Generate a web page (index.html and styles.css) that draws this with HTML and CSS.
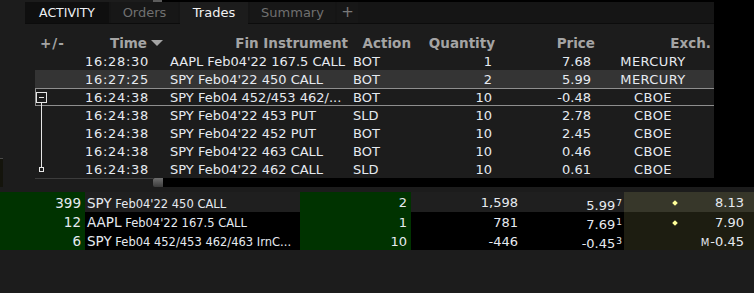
FILE: index.html
```html
<!DOCTYPE html>
<html>
    <head>
        <title>Trades</title>
        <link rel="stylesheet" href="styles.css">
    </head>
    <body>
        <!-- Trades panel -->
        <div class="top">
            <div class="main">
                <div class="vscroll">
                    <div class="vs-left"></div>
                    <div class="vs-thumb"></div>
                    <div class="vs-rest"></div>
                </div>

                <div class="tabs">
                    <div class="tabbar">
                        <div class="tab tab-activity">ACTIVITY</div>
                        <div class="tab tab-orders">Orders</div>
                        <div class="tab tab-trades active">Trades</div>
                        <div class="tab tab-summary">Summary</div>
                        <div class="tab tab-add">+</div>
                    </div>
                </div>

                <div class="blotter">
                    <div class="row head">
                        <div class="c-pm">+/-</div>
                        <div class="c-time">Time<span class="sort"></span></div>
                        <div class="c-inst">Fin Instrument</div>
                        <div class="c-act">Action</div>
                        <div class="c-qty">Quantity</div>
                        <div class="c-price">Price</div>
                        <div class="c-exch">Exch.</div>
                    </div>
                    <div class="row">
                        <div class="c-pm"></div>
                        <div class="c-time">16:28:30</div>
                        <div class="c-inst">AAPL Feb04'22 167.5 CALL</div>
                        <div class="c-act">BOT</div>
                        <div class="c-qty">1</div>
                        <div class="c-price">7.68</div>
                        <div class="c-exch">MERCURY</div>
                    </div>
                    <div class="row hover">
                        <div class="c-pm"></div>
                        <div class="c-time">16:27:25</div>
                        <div class="c-inst">SPY Feb04'22 450 CALL</div>
                        <div class="c-act">BOT</div>
                        <div class="c-qty">2</div>
                        <div class="c-price">5.99</div>
                        <div class="c-exch">MERCURY</div>
                    </div>
                    <div class="row group">
                        <div class="c-pm"></div>
                        <div class="c-time">16:24:38</div>
                        <div class="c-inst">SPY Feb04 452/453 462/...</div>
                        <div class="c-act">BOT</div>
                        <div class="c-qty">10</div>
                        <div class="c-price">-0.48</div>
                        <div class="c-exch">CBOE</div>
                    </div>
                    <div class="row">
                        <div class="c-pm"></div>
                        <div class="c-time">16:24:38</div>
                        <div class="c-inst">SPY Feb04'22 453 PUT</div>
                        <div class="c-act">SLD</div>
                        <div class="c-qty">10</div>
                        <div class="c-price">2.78</div>
                        <div class="c-exch">CBOE</div>
                    </div>
                    <div class="row">
                        <div class="c-pm"></div>
                        <div class="c-time">16:24:38</div>
                        <div class="c-inst">SPY Feb04'22 452 PUT</div>
                        <div class="c-act">BOT</div>
                        <div class="c-qty">10</div>
                        <div class="c-price">2.45</div>
                        <div class="c-exch">CBOE</div>
                    </div>
                    <div class="row">
                        <div class="c-pm"></div>
                        <div class="c-time">16:24:38</div>
                        <div class="c-inst">SPY Feb04'22 463 CALL</div>
                        <div class="c-act">BOT</div>
                        <div class="c-qty">10</div>
                        <div class="c-price">0.46</div>
                        <div class="c-exch">CBOE</div>
                    </div>
                    <div class="row">
                        <div class="c-pm"></div>
                        <div class="c-time">16:24:38</div>
                        <div class="c-inst">SPY Feb04'22 462 CALL</div>
                        <div class="c-act">SLD</div>
                        <div class="c-qty">10</div>
                        <div class="c-price">0.61</div>
                        <div class="c-exch">CBOE</div>
                    </div>

                    <!-- combo leg tree -->
                    <svg class="tree" width="14" height="150" viewBox="0 0 14 150">
                        <path d="M6.5 79V143" stroke="#e6e6e6" fill="none"/>
                        <rect x="1.5" y="68.5" width="10" height="10" fill="#1c1c1c" stroke="#e6e6e6"/>
                        <path d="M4 73.5H9" stroke="#e6e6e6" fill="none"/>
                        <rect x="4.5" y="143.5" width="4" height="4" fill="#1c1c1c" stroke="#e6e6e6"/>
                    </svg>
                </div>

                <div class="hscroll">
                    <div class="hs-left"></div>
                    <div class="hs-thumb"></div>
                    <div class="hs-rest"></div>
                </div>
            </div>
            <div class="side"></div>
        </div>

        <!-- Portfolio rows -->
        <div class="portfolio">
            <div class="prow first">
                <div class="p-count">399</div>
                <div class="p-inst"><span class="sym">SPY</span> Feb04'22 450 CALL</div>
                <div class="p-pos">2</div>
                <div class="p-val">1,598</div>
                <div class="p-avg">5.99<span class="tick">7</span></div>
                <div class="p-last"><span class="dot"></span><span>8.13</span></div>
            </div>
            <div class="prow">
                <div class="p-count">12</div>
                <div class="p-inst"><span class="sym">AAPL</span> Feb04'22 167.5 CALL</div>
                <div class="p-pos">1</div>
                <div class="p-val">781</div>
                <div class="p-avg">7.69<span class="tick">1</span></div>
                <div class="p-last"><span class="dot"></span><span>7.90</span></div>
            </div>
            <div class="prow">
                <div class="p-count">6</div>
                <div class="p-inst"><span class="sym">SPY</span> Feb04 452/453 462/463 IrnC...</div>
                <div class="p-pos">10</div>
                <div class="p-val">-446</div>
                <div class="p-avg">-0.45<span class="tick">3</span></div>
                <div class="p-last"><span></span><span><span class="mark">M</span>-0.45</span></div>
            </div>
        </div>

        <div class="edge"></div>
    </body>
</html>
```

FILE: styles.css
```css
body{
    margin: 0;
    width: 754px;
    height: 293px;
    overflow: hidden;
    position: relative;
    background-color: #1c1c1c;
    font-family: "DejaVu Sans", Verdana, sans-serif;
    font-size: 13px;
    color: #e6eaf0;
}

/* upper panel */
.top{
    display: flex;
    height: 187px;
}
.main{
    width: 714px;
    display: flex;
    flex-direction: column;
}
.side{
    flex: 1;
    background-color: #000;
}

.vscroll{
    display: flex;
    height: 2px;
}
.vs-left{
    width: 153px;
}
.vs-thumb{
    width: 9px;
    background-color: #5c5c5c;
}
.vs-rest{
    flex: 1;
    background-color: #000;
}

.tabs{
    padding-left: 25px;
    height: 22px;
}
.tabbar{
    display: flex;
    gap: 2px;
    height: 21px;
    background-color: #151515;
    border-bottom: 1px solid #0c0c0c;
}
.tab{
    height: 21px;
    line-height: 21px;
    text-align: center;
    background-color: #171717;
    color: #707070;
}
.tab-activity{
    width: 84px;
    background-color: #0f0f0f;
    color: #eef0f4;
    font-size: 12.5px;
}
.tab-orders{
    width: 67px;
}
.tab-trades{
    width: 68px;
}
.tab-summary{
    width: 85px;
}
.tab-add{
    width: 21px;
    font-size: 15px;
    color: #7a7a7a;
}
.tab.active{
    height: 22px;
    background-color: #1c1c1c;
    color: #f2f2f2;
}

.blotter{
    position: relative;
    margin-left: 35px;
    width: 679px;
    height: 154px;
    background-color: #1c1c1c;
}
.row{
    display: grid;
    grid-template-columns: 40px 93px 184px 62px 84px 100px 116px;
    height: 18px;
    padding-top: 1px;
    box-sizing: border-box;
    line-height: 18px;
    white-space: nowrap;
}
.row > div{
    overflow: hidden;
    height: 17px;
}
.row.head{
    height: 28px;
    line-height: 18px;
    padding-top: 10px;
    font-weight: bold;
    font-size: 13.5px;
    color: #a4a4a4;
}
.row.head > div{
    height: 18px;
}
.row.hover{
    background-color: #343434;
}
.row.group{
    box-shadow: inset 0 1px #8e8e8e, inset 0 -1px #8e8e8e, inset 1px 0 #8e8e8e;
}

.c-pm{
    padding-left: 5px;
}
.c-time{
    text-align: right;
    padding-right: 19px;
    letter-spacing: 0.7px;
}
.c-inst{
    padding-left: 2px;
}
.c-act{
    padding-left: 1px;
}
.c-qty{
    text-align: right;
    padding-right: 6px;
}
.c-price{
    text-align: right;
    padding-right: 7px;
}
.c-exch{
    text-align: center;
    padding-right: 6px;
    letter-spacing: 0.4px;
}
.head .c-pm{
    letter-spacing: 1px;
}
.head .c-time{
    padding-right: 3px;
    letter-spacing: 0;
}
.head .c-inst,
.head .c-act,
.head .c-qty,
.head .c-price,
.head .c-exch{
    text-align: right;
    padding-left: 0;
    padding-right: 3px;
    letter-spacing: 0;
}
.head .c-inst{
    padding-right: 4px;
}
.sort{
    display: inline-block;
    width: 0;
    height: 0;
    margin-left: 4px;
    margin-right: 2px;
    border-left: 6px solid transparent;
    border-right: 6px solid transparent;
    border-top: 6px solid #a4a4a4;
    vertical-align: 2px;
}

.tree{
    position: absolute;
    left: 0;
    top: 0;
}

.hscroll{
    display: flex;
    height: 9px;
    padding-left: 35px;
}
.hs-left{
    width: 118px;
    border-top: 1px solid #3c3c3c;
}
.hs-thumb{
    width: 10px;
    background: linear-gradient(#6e6e6e, #3c3c3c);
    border-radius: 2px 0 0 2px;
}
.hs-rest{
    flex: 1;
    background-color: #000;
}

/* lower portfolio rows */
.portfolio{
    margin-top: 5px;
}
.prow{
    display: grid;
    grid-template-columns: 85px 215px 111px 112px 101px 130px;
    height: 19px;
    line-height: 21px;
    white-space: nowrap;
    background-color: #000;
}
.prow > div{
    overflow: hidden;
}
.prow.first{
    height: 20px;
    line-height: 22px;
    background-color: #1f1f1f;
}
.p-count{
    background-color: #003300;
    text-align: right;
    padding-right: 4px;
    font-size: 13.5px;
}
.p-inst{
    padding-left: 2px;
    font-size: 11.5px;
}
.sym{
    font-size: 13.5px;
}
.p-pos{
    background-color: #003300;
    text-align: right;
    padding-right: 4px;
}
.p-val{
    text-align: right;
    padding-right: 5px;
}
.p-avg{
    text-align: right;
    padding-right: 2px;
}
.tick{
    font-size: 9px;
    vertical-align: 4px;
    margin-left: 1px;
}
.p-last{
    display: flex;
    justify-content: space-between;
    align-items: center;
    padding-left: 49px;
    padding-right: 10px;
    padding-top: 2px;
    background-color: #1d1d11;
}
.first .p-last{
    background-color: #37372a;
}
.dot{
    width: 4px;
    height: 4px;
    background-color: #ffff99;
    transform: rotate(45deg);
}
.mark{
    font-size: 10px;
    margin-right: 1px;
}

.edge{
    position: absolute;
    left: 0;
    top: 158px;
    width: 3px;
    height: 28px;
    border-top: 1px solid #4a4a4a;
    background-color: #14140c;
}
```
